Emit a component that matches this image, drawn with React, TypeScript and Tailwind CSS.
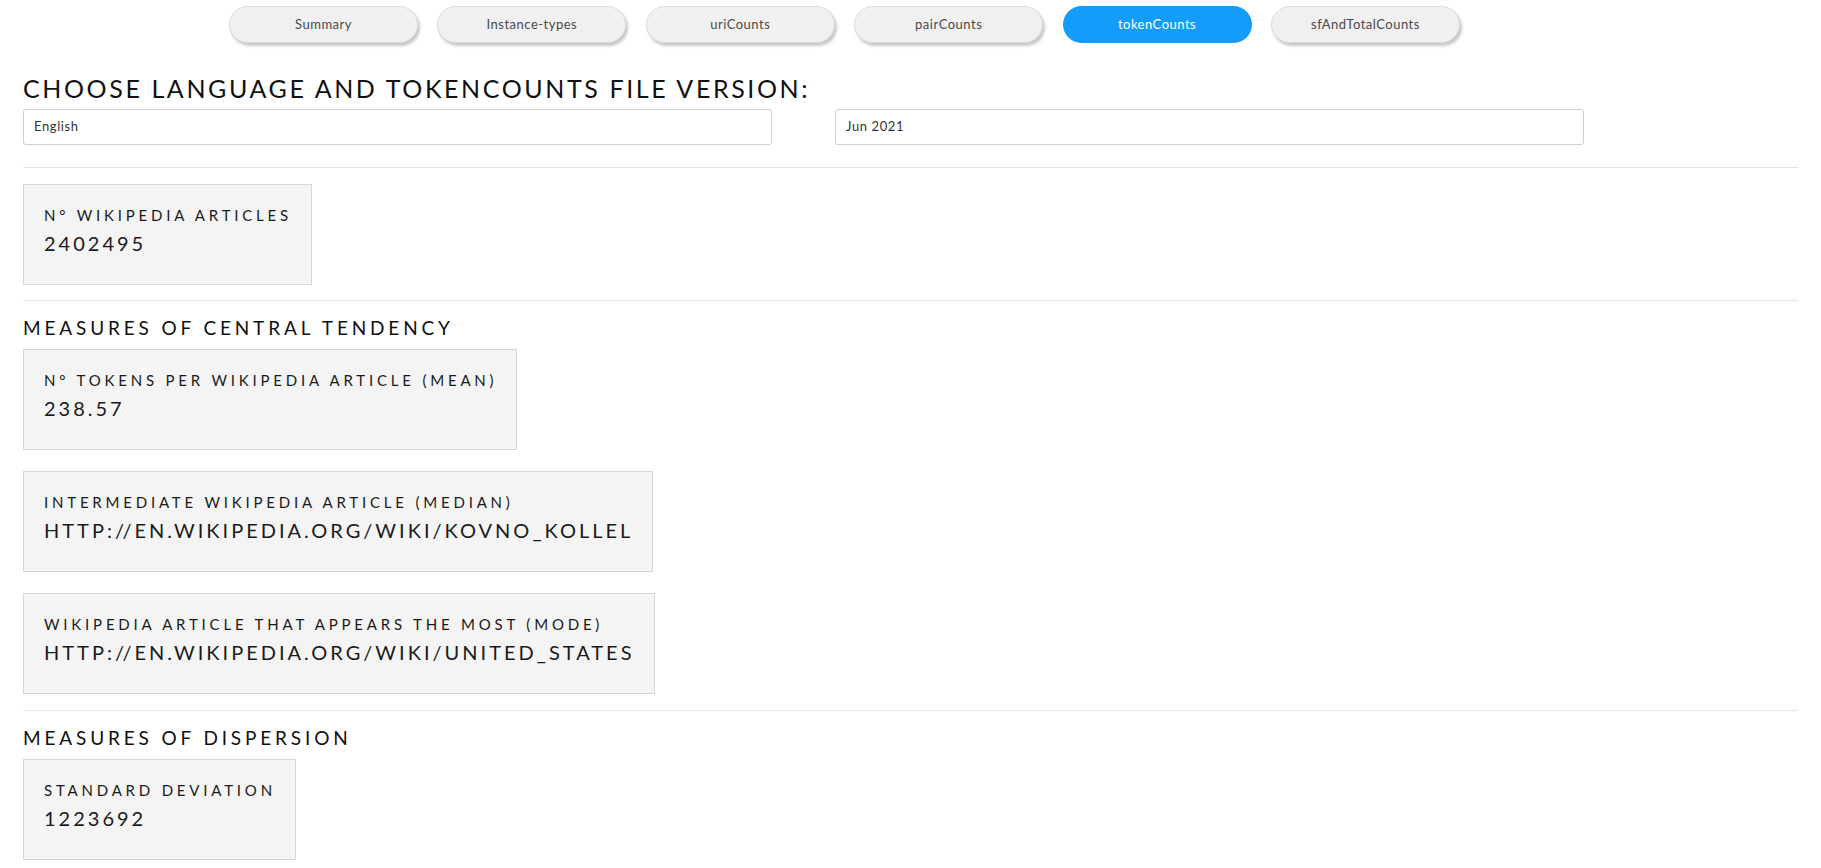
import React from "react";

const tabs = ["Summary", "Instance-types", "uriCounts", "pairCounts", "tokenCounts", "sfAndTotalCounts"];

function Card({ label, value }: { label: string; value: string }) {
  return (
    <div className="w-fit h-[101px] bg-[#f4f4f4] border border-[#d6d6d6] pl-[20px] pr-[19px] pt-[19px]">
      <div className="text-[15px] leading-[22px] tracking-[3.8px] text-[#1a1a1a] uppercase">{label}</div>
      <div className="text-[20px] leading-[26px] tracking-[3px] text-[#1a1a1a] mt-[4px]">{value}</div>
    </div>
  );
}

export default function App() {
  return (
    <div className="min-h-screen bg-white" style={{ fontFamily: "Lato, 'Noto Sans', sans-serif" }}>
      <div className="flex gap-[19.4px] pl-[229px] pt-[6px]">
        {tabs.map((t) => (
          <div
            key={t}
            className={
              t === "tokenCounts"
                ? "w-[189px] h-[37px] rounded-full bg-[#149cfb] text-white flex items-center justify-center text-[13px] tracking-[0.5px]"
                : "w-[189px] h-[37px] rounded-full bg-[#f0f0f0] border border-[#dcdcdc] text-[#4a4a4a] flex items-center justify-center text-[13px] tracking-[0.5px] shadow-[2px_3px_3px_rgba(0,0,0,0.22)]"
            }
          >
            {t}
          </div>
        ))}
      </div>
      <div className="px-[23px]">
        <h1 className="mt-[28px] text-[25px] leading-[34px] tracking-[2.6px] text-[#111] uppercase">
          Choose language and tokenCounts file version:
        </h1>
        <div className="flex gap-[63px] mt-[4px]">
          <div className="w-[749px] h-[36px] border border-[#cfcfcf] rounded-[3px] flex items-center pl-[10px] text-[13px] tracking-[0.6px] text-[#333]">
            English
          </div>
          <div className="w-[749px] h-[36px] border border-[#cfcfcf] rounded-[3px] flex items-center pl-[10px] text-[13px] tracking-[0.6px] text-[#333]">
            Jun 2021
          </div>
        </div>
        <div className="h-px bg-[#e5e5e5] mt-[22px]" />
        <div className="mt-[16px]">
          <Card label="N° Wikipedia articles" value="2402495" />
        </div>
        <div className="h-px bg-[#e5e5e5] mt-[15px]" />
        <h2 className="mt-[15px] text-[19px] leading-[24px] tracking-[3.85px] text-[#111] uppercase">
          Measures of central tendency
        </h2>
        <div className="mt-[9px] flex flex-col gap-[21px]">
          <Card label="N° tokens per Wikipedia article (mean)" value="238.57" />
          <Card label="Intermediate Wikipedia article (median)" value="HTTP://EN.WIKIPEDIA.ORG/WIKI/KOVNO_KOLLEL" />
          <Card label="Wikipedia article that appears the most (mode)" value="HTTP://EN.WIKIPEDIA.ORG/WIKI/UNITED_STATES" />
        </div>
        <div className="h-px bg-[#e5e5e5] mt-[16px]" />
        <h2 className="mt-[15px] text-[19px] leading-[24px] tracking-[3.85px] text-[#111] uppercase">
          Measures of dispersion
        </h2>
        <div className="mt-[9px]">
          <Card label="Standard deviation" value="1223692" />
        </div>
      </div>
    </div>
  );
}
